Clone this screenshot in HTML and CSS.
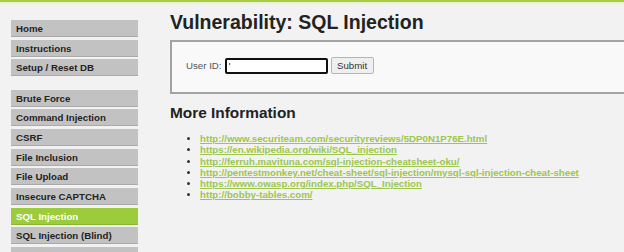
FILE: index.html
```html
<!DOCTYPE html>
<html lang="en">
<head>
    <meta charset="UTF-8">
    <title>Vulnerability: SQL Injection</title>
    <link rel="stylesheet" href="styles.css">
</head>
<body>
    <div class="topbar"></div>
    <div class="layout">
        <div class="menu">
            <ul class="menu-block">
                <li><a href="#">Home</a></li>
                <li><a href="#">Instructions</a></li>
                <li><a href="#">Setup / Reset DB</a></li>
            </ul>
            <ul class="menu-block">
                <li><a href="#">Brute Force</a></li>
                <li><a href="#">Command Injection</a></li>
                <li><a href="#">CSRF</a></li>
                <li><a href="#">File Inclusion</a></li>
                <li><a href="#">File Upload</a></li>
                <li><a href="#">Insecure CAPTCHA</a></li>
                <li class="selected"><a href="#">SQL Injection</a></li>
                <li><a href="#">SQL Injection (Blind)</a></li>
                <li><a href="#" class="empty"></a></li>
            </ul>
        </div>

        <div class="main">
            <h1>Vulnerability: SQL Injection</h1>

            <div class="vulnerable-code">
                <form class="user-form" action="#" method="GET">
                    <label for="user-id">User ID:</label>
                    <input type="text" id="user-id" name="id" value="'">
                    <input type="submit" class="submit-btn" value="Submit">
                </form>
            </div>

            <h2>More Information</h2>
            <ul class="links">
                <li><a href="#">http://www.securiteam.com/securityreviews/5DP0N1P76E.html</a></li>
                <li><a href="#">https://en.wikipedia.org/wiki/SQL_injection</a></li>
                <li><a href="#">http://ferruh.mavituna.com/sql-injection-cheatsheet-oku/</a></li>
                <li><a href="#">http://pentestmonkey.net/cheat-sheet/sql-injection/mysql-sql-injection-cheat-sheet</a></li>
                <li><a href="#">https://www.owasp.org/index.php/SQL_Injection</a></li>
                <li><a href="#">http://bobby-tables.com/</a></li>
            </ul>
        </div>
    </div>
</body>
</html>
```

FILE: styles.css
```css
* {
    margin: 0;
    padding: 0;
    box-sizing: border-box;
}

body {
    font-family: 'Liberation Sans', Arial, sans-serif;
    font-size: 9.7px;
    color: #222;
    background-color: #f2f2f2;
    overflow: hidden;
}

.topbar {
    height: 3px;
    background-color: #a9cd45;
    border-bottom: 1px solid #e4efc6;
}

.layout {
    display: flex;
}

/* menu de gauche */
.menu {
    width: 127px;
    margin-left: 11px;
    padding-top: 17px;
    flex-shrink: 0;
}

.menu-block {
    list-style: none;
    margin-bottom: 13.3px;
}

.menu-block li {
    margin-bottom: 2.7px;
}

.menu-block li a {
    display: block;
    height: 17px;
    line-height: 17px;
    padding-left: 5px;
    font-weight: bold;
    color: #222;
    text-decoration: none;
    background-color: #c2c2c2;
    border-bottom: 1px solid #a9a9a9;
}

.menu-block li.selected a {
    background-color: #9ccb3c;
    border-bottom-color: #8ab634;
    color: #fff;
}

/* contenu principal */
.main {
    margin-left: 32px;
    padding-top: 8px;
    flex: 1;
    min-width: 0;
}

h1 {
    font-size: 19.5px;
    line-height: 22px;
    color: #222;
    white-space: nowrap;
}

.vulnerable-code {
    margin-top: 7px;
    margin-right: -20px;
    height: 54px;
    background-color: #f9f9f9;
    border: 2px solid #a3a3a3;
    border-right: none;
    padding: 15px 0 0 14px;
}

.user-form {
    display: flex;
    align-items: center;
    color: #555;
}

.user-form label {
    margin-right: 3px;
}

#user-id {
    width: 103px;
    height: 16px;
    border: 2px solid #111;
    border-radius: 2px;
    background: #fff;
    font-family: inherit;
    font-size: 9.7px;
    padding: 0 2px;
    outline: none;
}

.submit-btn {
    margin-left: 3px;
    width: 43px;
    height: 17px;
    font-family: inherit;
    font-size: 9.7px;
    color: #333;
    background-color: #efefef;
    border: 1px solid #b5b5b5;
    border-radius: 2px;
}

h2 {
    margin-top: 10px;
    font-size: 15.4px;
    line-height: 18px;
    color: #222;
}

.links {
    margin-top: 11px;
    padding-left: 30px;
    list-style: disc;
}

.links li {
    line-height: 11.3px;
    font-size: 9.7px;
    font-weight: bold;
    white-space: nowrap;
    color: #333;
}

.links li a {
    color: #9cc64c;
}
```
